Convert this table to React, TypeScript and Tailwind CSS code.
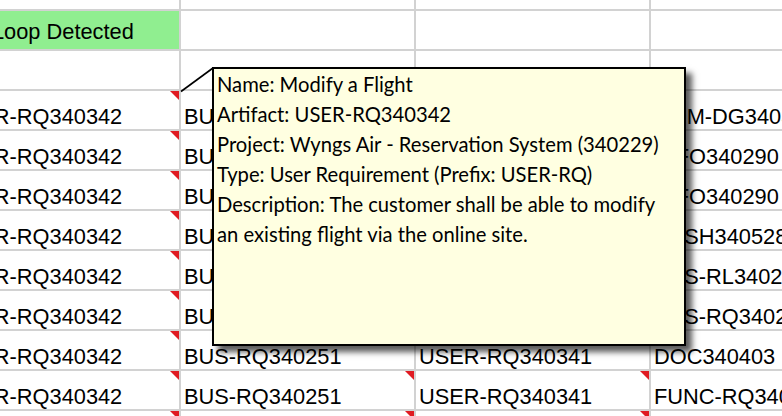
import React from "react";

type Cell = { text?: string; flag?: boolean; green?: boolean; indent?: boolean };

const A = "USER-RQ340342";
const B = "BUS-RQ340251";
const C = "USER-RQ340341";

const rows: { height: string; cells: Cell[] }[] = [
  { height: "h-[11px]", cells: [{}, {}, {}, {}] },
  { height: "h-[40px]", cells: [{ text: "Loop Detected", green: true, indent: true }, {}, {}, {}] },
  { height: "h-[40px]", cells: [{}, {}, {}, {}] },
  { height: "h-[40px]", cells: [{ text: A, flag: true }, { text: B, flag: true }, { text: C, flag: true }, { text: "DOM-DG340345" }] },
  { height: "h-[40px]", cells: [{ text: A, flag: true }, { text: B, flag: true }, { text: C, flag: true }, { text: "INFO340290" }] },
  { height: "h-[40px]", cells: [{ text: A, flag: true }, { text: B, flag: true }, { text: C, flag: true }, { text: "INFO340290" }] },
  { height: "h-[40px]", cells: [{ text: A, flag: true }, { text: B, flag: true }, { text: C, flag: true }, { text: "DASH340528" }] },
  { height: "h-[40px]", cells: [{ text: A, flag: true }, { text: B, flag: true }, { text: C, flag: true }, { text: "BUS-RL340231" }] },
  { height: "h-[40px]", cells: [{ text: A, flag: true }, { text: B, flag: true }, { text: C, flag: true }, { text: "BUS-RQ340251" }] },
  { height: "h-[40px]", cells: [{ text: A, flag: true }, { text: B, flag: true }, { text: C, flag: true }, { text: "DOC340403" }] },
  { height: "h-[40px]", cells: [{ text: A, flag: true }, { text: B, flag: true }, { text: C, flag: true }, { text: "FUNC-RQ340350" }] },
  { height: "h-[40px]", cells: [{ text: A, flag: true }, { text: B, flag: true }, { text: C, flag: true }, { text: "FUNC-RQ340351" }] },
];

function SheetCell({ cell }: { cell: Cell }) {
  return (
    <div
      className={`relative w-[235px] h-full shrink-0 border-r-2 border-b-2 border-[#d2d2d2] flex items-end overflow-hidden whitespace-nowrap ${
        cell.green ? "bg-[#90ee90] pb-[5px]" : "bg-white"
      } ${cell.indent ? "pl-[46px]" : "pl-[3px]"}`}
    >
      {cell.text && <span className="leading-[24px]">{cell.text}</span>}
      {cell.flag && (
        <div className="absolute top-0 right-0 w-0 h-0 border-t-[9px] border-l-[9px] border-t-[#e01b22] border-l-transparent" />
      )}
    </div>
  );
}

export default function App() {
  return (
    <div className="relative w-[782px] h-[416px] overflow-hidden bg-white text-black font-['Liberation_Sans',Arial,sans-serif] text-[21.8px]">
      <div className="flex flex-col ml-[-54px]">
        {rows.map((row, i) => (
          <div key={i} className={`flex ${row.height}`}>
            {row.cells.map((cell, j) => (
              <SheetCell key={j} cell={cell} />
            ))}
          </div>
        ))}
      </div>

      {/* comment connector */}
      <svg className="absolute left-0 top-0" width="782" height="416">
        <line x1="181" y1="91.5" x2="213" y2="68" stroke="#000" strokeWidth="1.6" />
      </svg>

      {/* comment box */}
      <div className="absolute left-[212px] top-[67px] w-[474px] h-[279px] bg-[#ffffe1] border-2 border-black shadow-[6px_6px_6px_rgba(0,0,0,0.65)] pl-[3px] font-['Lato','Noto_Sans',sans-serif] text-[20.2px] leading-[30px] text-black">
        <div>Name: Modify a Flight</div>
        <div>Artifact: USER-RQ340342</div>
        <div>Project: Wyngs Air - Reservation System (340229)</div>
        <div>Type: User Requirement (Prefix: USER-RQ)</div>
        <div>Description: The customer shall be able to modify</div>
        <div>an existing flight via the online site.</div>
      </div>
    </div>
  );
}
